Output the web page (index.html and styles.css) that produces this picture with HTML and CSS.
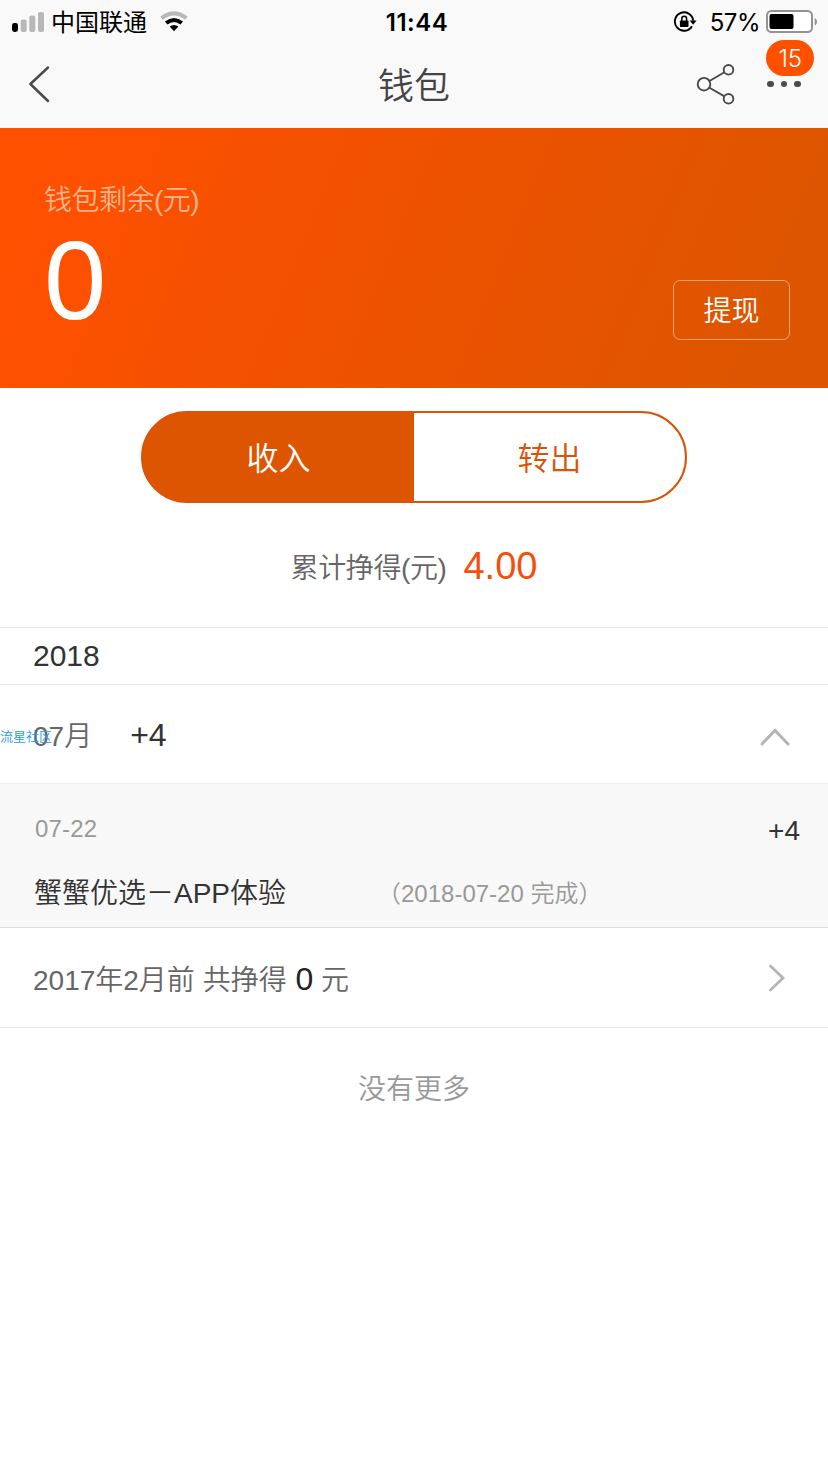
FILE: index.html
```html
<!DOCTYPE html>
<html lang="zh-CN">
<head>
<meta charset="utf-8">
<title>钱包</title>
<link rel="stylesheet" href="styles.css">
</head>
<body>
<header class="top">
  <div class="status">
    <div class="status-left">
      <svg class="signal" width="34" height="22" viewBox="0 0 34 22"><rect x="1" y="12" width="6" height="9" rx="2.4" fill="#000"/><g fill="#b8b8b8"><rect x="9.7" y="8.5" width="6" height="12.5" rx="2"/><rect x="18.3" y="4.5" width="6" height="16.5" rx="2"/><rect x="27" y="1" width="6" height="20" rx="2"/></g></svg>
      <span class="carrier">中国联通</span>
      <svg class="wifi" width="28" height="22" viewBox="0 0 28 22" fill="none"><path d="M1.6 7.2Q14 -2.4 26.4 7.2" stroke="#b8b8b8" stroke-width="4"/><path d="M6.2 12Q14 5.9 21.8 12" stroke="#000" stroke-width="4"/><path d="M9.7 15.5Q14 12.5 18.3 15.5L14 20.2Z" fill="#000"/></svg>
    </div>
    <div class="clock">11:44</div>
    <div class="status-right">
      <svg class="lock" width="24" height="22" viewBox="0 0 24 22"><path d="M19 15.2A9.2 9.2 0 1 1 20.2 9.6" fill="none" stroke="#000" stroke-width="1.9"/><path d="M16.6 9.6h7L20.1 13.8Z"/><rect x="6.9" y="9.4" width="8.6" height="6.6" rx="0.8"/><path d="M8.8 10V7.6a2.4 2.4 0 0 1 4.8 0V10" fill="none" stroke="#000" stroke-width="1.5"/></svg>
      <span class="percent">57%</span>
      <svg class="battery" width="52" height="24" viewBox="0 0 52 24"><rect x="1" y="1" width="45" height="21" rx="4.5" fill="#fff" stroke="#929292" stroke-width="2"/><rect x="3.5" y="4" width="24" height="15" rx="2" fill="#000"/><path d="M48.7 8c3.1 1.5 3.1 6 0 7.5Z" fill="#929292"/></svg>
    </div>
  </div>
  <nav class="nav">
    <svg class="back" width="24" height="40" viewBox="0 0 24 40"><path d="M21 3.5 3.4 20l17.6 17" fill="none" stroke="#4a4a4a" stroke-width="2.5" stroke-linecap="round" stroke-linejoin="round"/></svg>
    <h1 class="title">钱包</h1>
    <div class="actions">
      <svg class="share" width="40" height="42" viewBox="0 0 40 42" fill="none" stroke="#4a4a4a" stroke-width="1.9"><circle cx="8" cy="21.2" r="6.3"/><circle cx="32.5" cy="6.8" r="4.8"/><circle cx="32.5" cy="35.8" r="4.8"/><path d="M13.5 18 28.4 9.2M13.5 24.7l15 8.7"/></svg>
      <div class="more"><i></i><i></i><i></i><span class="badge">15</span></div>
    </div>
  </nav>
</header>
<section class="hero">
  <div>
    <div class="hero-label">钱包剩余(元)</div>
    <div class="hero-value">0</div>
  </div>
  <button class="withdraw">提现</button>
</section>
<main>
  <div class="tabs"><div class="tab active">收入</div><div class="tab">转出</div></div>
  <div class="total"><span>累计挣得(元)</span><strong>4.00</strong></div>
  <div class="year">2018</div>
  <div class="month">
    <span class="month-name">07月</span><span class="month-sum">+4</span>
    <svg class="up" width="32" height="20" viewBox="0 0 32 20"><path d="M3 17 16 3.5 29 17" fill="none" stroke="#b5b5b5" stroke-width="3" stroke-linecap="round"/></svg>
    <span class="watermark">流星社区</span>
  </div>
  <div class="entry">
    <div class="entry-head"><span>07-22</span><b>+4</b></div>
    <div class="entry-body"><span class="entry-name">蟹蟹优选－APP体验</span><span class="entry-done">（2018-07-20 完成）</span></div>
  </div>
  <div class="older">
    <span>2017年2月前 共挣得 <b>0</b> 元</span>
    <svg width="20" height="32" viewBox="0 0 20 32"><path d="M3.5 4 16 16 3.5 28" fill="none" stroke="#b5b5b5" stroke-width="2.8" stroke-linecap="round"/></svg>
  </div>
  <div class="end">没有更多</div>
</main>
</body>
</html>
```
FILE: styles.css
```css
* { box-sizing: border-box; }
body { margin: 0; background: #fff; color: #333; font-family: "Liberation Sans", "Noto Sans CJK SC", sans-serif; font-weight: 350; }
svg { display: block; flex: none; }
b, strong { font-weight: 400; }

.top { height: 128px; background: #f9f9f9; }
.status { height: 42px; display: grid; grid-template-columns: 1fr auto 1fr; align-items: center; padding: 0 10px 0 11px; color: #000; font-family: Inter, "Noto Sans CJK SC", sans-serif; font-weight: 400; font-size: 24px; line-height: 42px; }
.status-left, .status-right { display: flex; align-items: center; }
.status-right { justify-content: flex-end; }
.carrier { margin: 2px 13px 0 6px; }
.clock { padding: 1px 0 0 5px; font-weight: 600; font-size: 24px; letter-spacing: 0.5px; }
.percent { margin: 1px 6px 0 13px; font-size: 24px; letter-spacing: -0.5px; }

.nav { height: 86px; display: grid; grid-template-columns: 1fr auto 1fr; align-items: center; padding: 0 27px 2px; }
.title { margin: 0; padding-top: 6px; font-size: 36px; line-height: 78px; font-weight: 350; color: #444; }
.actions { display: flex; justify-content: flex-end; align-items: center; }
.more { position: relative; display: flex; gap: 7px; margin-left: 31px; }
.more i { width: 6.6px; height: 6.6px; border-radius: 50%; background: #4a4a4a; }
.badge { position: absolute; left: -1px; top: -41px; width: 48px; height: 36px; border-radius: 18px; background: #ff5000; color: #fff; font: 350 24px/37px Inter, sans-serif; text-align: center; }

.hero { height: 260px; display: flex; justify-content: space-between; align-items: flex-end; padding: 0 38px 48px 44px; background: linear-gradient(112deg, #ff5000 6%, #dd5500 92%); color: #fff; }
.hero-label { font-size: 28px; line-height: 40px; letter-spacing: -0.5px; color: #ffb38d; }
.hero-value { font-size: 112px; line-height: 120px; margin-bottom: -1px; }
.withdraw { width: 117px; height: 60px; padding: 3px 0 0; border: 1.5px solid #f3a577; border-radius: 7px; background: transparent; color: #fff; font: inherit; font-size: 28px; line-height: 54px; }

.tabs { display: flex; width: 546px; height: 92px; margin: 23px auto 0 141px; border: 2px solid #d85508; border-radius: 46px; background: linear-gradient(90deg, #dd5500 50%, #fff 50%) border-box; }
.tab { flex: 1; padding-top: 2px; text-align: center; font-size: 32px; line-height: 88px; color: #d85508; }
.tab.active { color: #fff; }
.total { height: 125px; display: flex; justify-content: center; align-items: center; gap: 17px; padding-top: 3px; border-bottom: 1px solid #e5e5e5; font-size: 28px; letter-spacing: -0.4px; color: #666; }
.total span { margin-top: -2px; }
.total strong { font-size: 38px; letter-spacing: 0; color: #f2500c; }
.year { height: 57px; padding-left: 33px; border-bottom: 1px solid #e8e8e8; font-size: 30px; line-height: 56px; }
.month { position: relative; height: 99px; display: flex; align-items: center; padding: 3px 37px 0 33px; border-bottom: 1px solid #eee; font-size: 28px; }
.month-name { margin-top: -4px; color: #666; }
.month-sum { margin: -1px 0 0 38px; font-size: 32px; }
.up { margin: 2px 0 0 auto; }
.watermark { position: absolute; left: 0; top: 42px; font-size: 13px; line-height: 20px; color: #2799ee; }
.entry { height: 144px; padding: 27px 28px 0 34px; background: #f8f8f8; border-bottom: 1px solid #ddd; }
.entry-head { display: flex; justify-content: space-between; height: 36px; line-height: 36px; padding-left: 1px; font-size: 24px; letter-spacing: 0.2px; color: #999; }
.entry-head b { font-size: 28px; line-height: 40px; letter-spacing: 0; color: #333; }
.entry-body { display: flex; align-items: center; margin-top: 26px; line-height: 42px; }
.entry-name { font-size: 28px; width: 343px; }
.entry-done { font-size: 24px; color: #999; }
.older { height: 100px; display: flex; justify-content: space-between; align-items: center; padding: 1px 41px 0 33px; border-bottom: 1px solid #e8e8e8; font-size: 28px; color: #666; }
.older b { margin-left: 1px; font-size: 32px; color: #222; }
.end { padding-top: 41px; text-align: center; font-size: 28px; line-height: 42px; color: #999; }
```
